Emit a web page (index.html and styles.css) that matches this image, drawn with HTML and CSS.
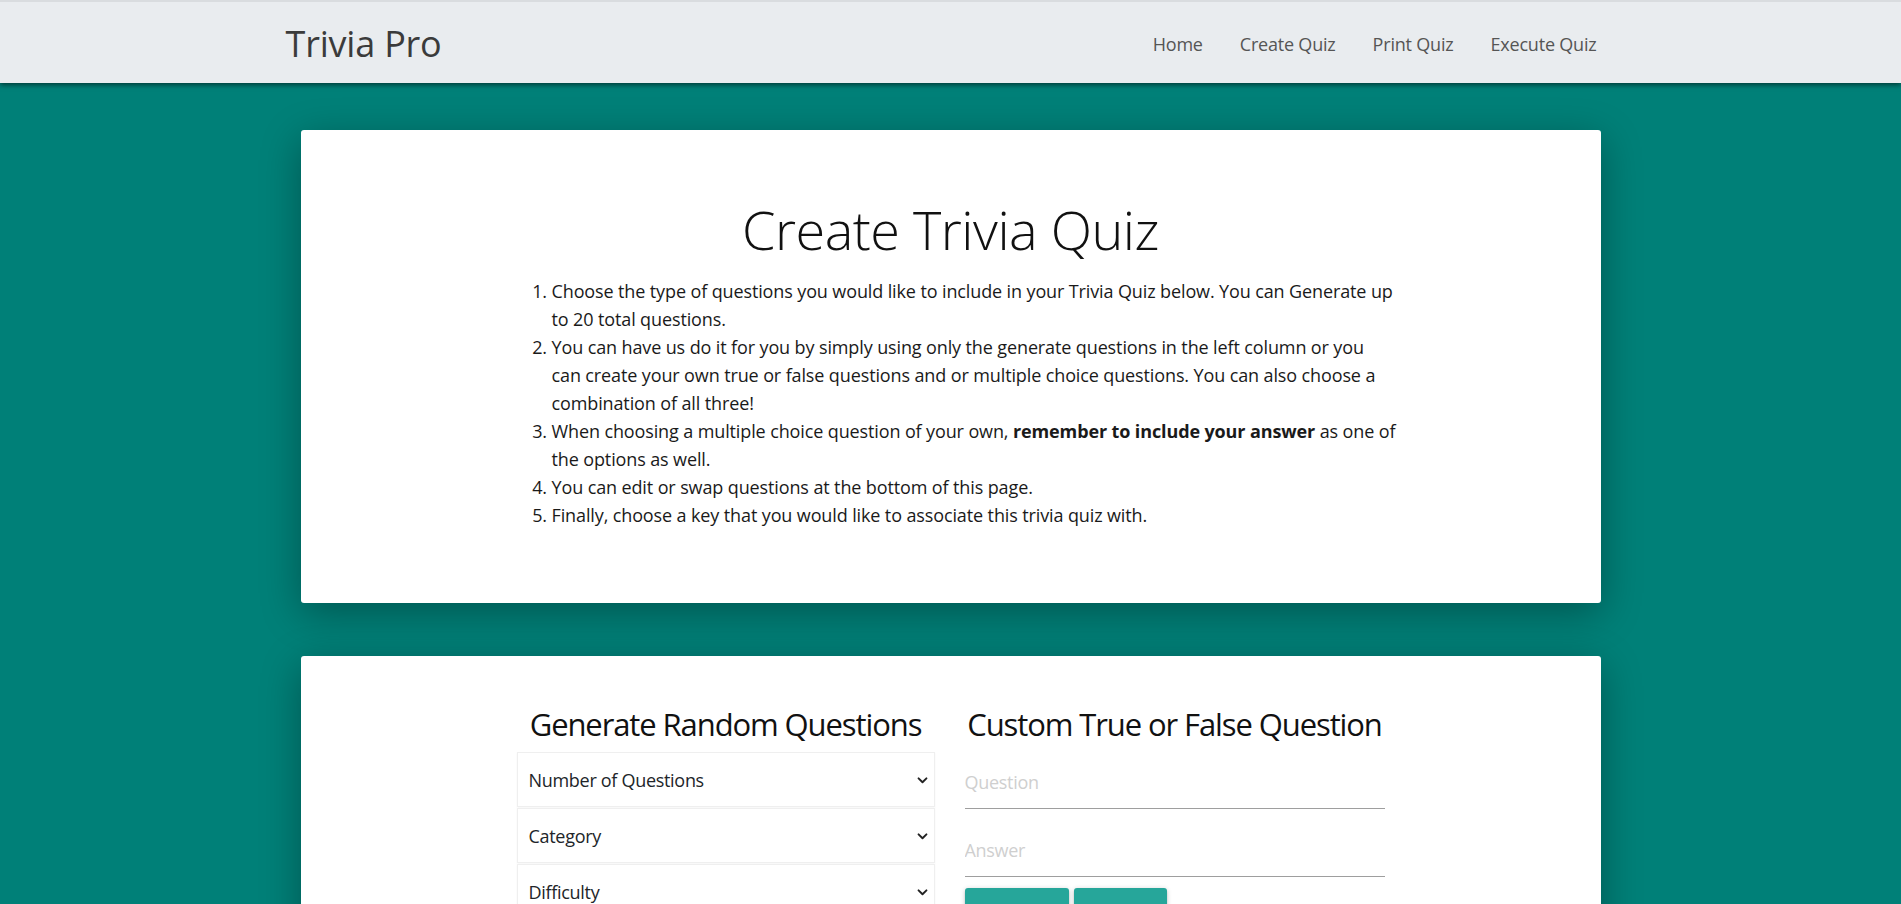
FILE: index.html
```html
<!DOCTYPE html>
<html lang="en">
<head>
<meta charset="utf-8">
<title>Trivia Pro - Create Quiz</title>
<link rel="stylesheet" href="styles.css">
</head>
<body>
<header class="navbar">
  <div class="nav-inner">
    <a class="brand" href="#">Trivia Pro</a>
    <nav class="nav-links">
      <a href="#">Home</a>
      <a href="#">Create Quiz</a>
      <a href="#">Print Quiz</a>
      <a href="#">Execute Quiz</a>
    </nav>
  </div>
</header>
<main class="page">
  <section class="card intro-card">
    <h1 class="title">Create Trivia Quiz</h1>
    <ol class="steps">
      <li>Choose the type of questions you would like to include in your Trivia Quiz below. You can Generate up to 20 total questions.</li>
      <li>You can have us do it for you by simply using only the generate questions in the left column or you can&nbsp;create your own true or false questions and or multiple choice questions. You can also choose a combination of all three!</li>
      <li>When choosing a multiple choice question of your own, <strong>remember to include your answer</strong> as one of the options as well.</li>
      <li>You can edit or swap questions at the bottom of this page.</li>
      <li>Finally, choose a key that you would like to associate this trivia quiz with.</li>
    </ol>
  </section>
  <section class="card builder-card">
    <div class="builder">
      <div class="col">
        <h2 class="col-title">Generate Random Questions</h2>
        <div class="select"><span>Number of Questions</span><svg class="chev" viewBox="0 0 12 8" width="11" height="7"><path d="M1.5 1.5 6 6l4.5-4.5" fill="none" stroke="#222" stroke-width="2.2" stroke-linecap="round" stroke-linejoin="round"/></svg></div>
        <div class="select"><span>Category</span><svg class="chev" viewBox="0 0 12 8" width="11" height="7"><path d="M1.5 1.5 6 6l4.5-4.5" fill="none" stroke="#222" stroke-width="2.2" stroke-linecap="round" stroke-linejoin="round"/></svg></div>
        <div class="select"><span>Difficulty</span><svg class="chev" viewBox="0 0 12 8" width="11" height="7"><path d="M1.5 1.5 6 6l4.5-4.5" fill="none" stroke="#222" stroke-width="2.2" stroke-linecap="round" stroke-linejoin="round"/></svg></div>
      </div>
      <div class="col">
        <h2 class="col-title">Custom True or False Question</h2>
        <input class="field" type="text" placeholder="Question">
        <input class="field" type="text" placeholder="Answer">
        <div class="btn-row">
          <button class="btn btn-wide">Submit</button>
          <button class="btn">Clear</button>
        </div>
      </div>
    </div>
  </section>
</main>
</body>
</html>
```
FILE: styles.css
```css
* { box-sizing: border-box; }
html, body { margin: 0; padding: 0; }
body {
  background: #008078;
  font-family: "Open Sans", "Noto Sans", sans-serif;
  color: #212529;
  font-size: 18px;
  overflow: hidden;
}
.navbar {
  background: #e9ecef;
  border-top: 2px solid #d9dcdf;
  height: 83px;
  box-shadow: 0 2px 5px rgba(0, 0, 0, 0.55);
  position: relative;
  z-index: 2;
}
.nav-inner {
  width: 1330px;
  margin: 0 auto;
  height: 100%;
  display: flex;
  align-items: center;
  justify-content: space-between;
  padding-right: 19px;
}
.brand {
  font-size: 36px;
  color: #3b3b3b;
  text-decoration: none;
  letter-spacing: -0.2px;
  margin-top: 2px;
}
.nav-links {
  display: flex;
  gap: 37px;
  margin-top: 2px;
}
.nav-links a {
  font-size: 18px;
  color: #555;
  text-decoration: none;
  letter-spacing: -0.2px;
}
.page {
  padding-top: 47px;
}
.card {
  width: 1300px;
  margin: 0 auto;
  background: #fff;
  border-radius: 3px;
  box-shadow: 0 10px 40px rgba(0, 0, 0, 0.33);
}
.intro-card {
  padding: 66px 0 74px;
  margin-bottom: 53px;
}
.title {
  margin: 0 0 14px;
  text-align: center;
  font-weight: 300;
  font-size: 54px;
  line-height: 67px;
  color: #111;
  letter-spacing: -0.5px;
}
.steps {
  width: 866px;
  margin: 0 0 0 232px;
  padding-left: 19px;
  font-size: 18px;
  line-height: 28px;
  letter-spacing: -0.12px;
  color: #1a1a1a;
}
.steps strong { font-weight: 700; }
.builder-card {
  padding-top: 48px;
  height: 400px;
}
.builder {
  width: 868px;
  margin: 0 auto;
  display: grid;
  grid-template-columns: 418px 420px;
  column-gap: 30px;
}
.col-title {
  margin: 0 0 8px;
  text-align: center;
  font-weight: 400;
  font-size: 31px;
  line-height: 40px;
  color: #111;
  letter-spacing: -1.1px;
  white-space: nowrap;
}
.select {
  height: 55px;
  border: 1px solid #efefef;
  margin-bottom: 1px;
  display: flex;
  align-items: center;
  justify-content: space-between;
  padding: 0 6px 0 11px;
  font-size: 18px;
  letter-spacing: -0.3px;
  box-shadow: 0 1px 2px rgba(0, 0, 0, 0.04);
}
.chev { margin-top: 2px; }
.field {
  display: block;
  width: 100%;
  height: 46px;
  border: none;
  border-bottom: 1px solid #9e9e9e;
  outline: none;
  padding: 0 0 8px;
  font-family: inherit;
  font-size: 18px;
  letter-spacing: -0.3px;
  margin: 18px 0 0;
  background: transparent;
}
.field:first-of-type { margin-top: 19px; }
.field + .field { margin-top: 22px; }
.field::placeholder { color: #cfcfcf; }
.btn-row {
  display: flex;
  gap: 5px;
  margin-top: 11px;
}
.btn {
  width: 93px;
  height: 40px;
  border: none;
  border-radius: 3px;
  background: #26a69a;
  color: #fff;
  font-family: inherit;
  font-size: 14px;
  line-height: 48px;
  text-transform: uppercase;
  padding: 0;
  box-shadow: 0 2px 2px rgba(0, 0, 0, 0.14), 0 3px 1px -2px rgba(0, 0, 0, 0.12), 0 1px 5px rgba(0, 0, 0, 0.2);
}
.btn-wide { width: 104px; }
```
